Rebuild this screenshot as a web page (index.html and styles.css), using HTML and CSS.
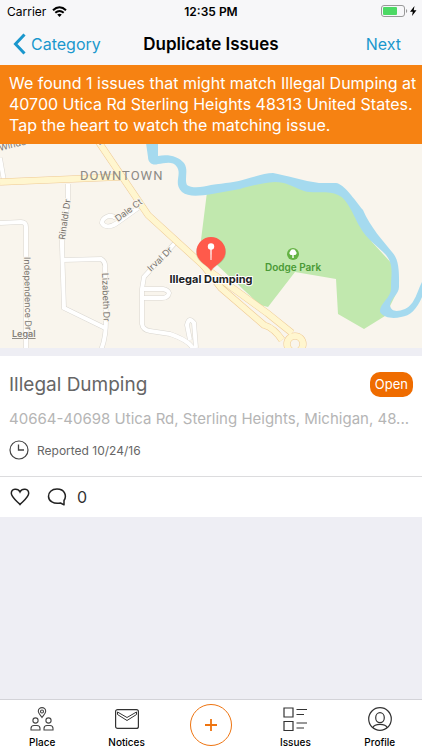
FILE: index.html
```html
<!doctype html>
<html lang="en">
<head>
  <meta charset="utf-8">
  <meta name="viewport" content="width=device-width, initial-scale=1">
  <title>Duplicate Issues</title>
  <link rel="stylesheet" href="styles.css">
</head>
<body>
  <header class="top">
    <div class="status">
      <div class="carrier">
        <span>Carrier</span>
        <svg width="15" height="11" viewBox="0 0 15 11" fill="none" stroke="#000" stroke-width="2">
          <path d="M1 4.2C5 .4 10 .4 14 4.2M3.3 6.8c2.600-2.300 5.800-2.300 8.400 0"/>
          <path d="M7.500 11 5.200 8.600c1.400-1.200 3.200-1.200 4.600 0z" fill="#000" stroke="none"/>
        </svg>
      </div>
      <span class="clock">12:35 PM</span>
      <div class="battery">
        <svg width="36" height="12" viewBox="0 0 36 12">
          <rect x=".5" y=".5" width="23" height="11" rx="2.500" fill="none" stroke="#999"/>
          <rect x="2" y="2" width="14" height="8" rx="1" fill="#4cd964"/>
          <path d="M25 4c1.600.5 1.600 3.500 0 4z" fill="#999"/>
          <path d="M33.500 1 29 6.800h2.800L31 11l4.500-5.800h-2.800z"/>
        </svg>
      </div>
    </div>
    <nav class="navbar">
      <a class="back" href="#">
        <svg width="13" height="22" viewBox="0 0 13 22" fill="none" stroke="#1a97cd" stroke-width="3">
          <path d="M11.500 1.500 2.500 11l9 9.500"/>
        </svg>
        Category
      </a>
      <h1>Duplicate Issues</h1>
      <a class="next" href="#">Next</a>
    </nav>
  </header>

  <p class="banner">We found 1 issues that might match Illegal Dumping at 40700 Utica Rd Sterling Heights 48313 United States. Tap the heart to watch the matching issue.</p>

  <main>
    <svg class="map" viewBox="0 0 422 204" preserveAspectRatio="xMidYMid slice">
      <rect width="422" height="204" fill="#f9f5ed"/>

      <!-- park -->
      <path d="M207 48 274 34 298 40 340 46 356 66 372 98 394 122 396 150 385 172 364 185 338 170 336 135 295 128 268 163 260 161 202 107 201 96z" fill="#c1e8ae"/>

      <!-- river -->
      <path d="M146-1H158V12C168 10 178 12 184 19C189 26 184 35 187 41C192 45 204 43 211 41C225 39 237 38 246 35C257 32 266 29 273 29C285 31 304 37 319 39H336C344 40 354 55 363 66C370 83 384 98 392 108C400 116 399 132 399 143C399 150 391 154 390 161C391 168 397 168 405 165C415 161 418 145 422 138V153C417 165 410 172 401 173C393 175 384 174 380 168C379 159 392 154 391 143C391 130 394 121 386 111C379 103 366 95 360 83C354 73 348 55 338 51C329 46 313 50 304 47C291 42 286 38 275 38C262 39 250 42 240 45L212 50C199 52 188 53 182 48C173 39 182 31 177 23C172 16 164 20 158 20C153 22 148 19 148 13z" fill="#a5daef"/>

      <!-- side streets -->
      <g fill="none" stroke="#d9d6d0" stroke-width="5">
        <path d="M0 14 4 37M26 205V83Q26 78 21 78L0 79"/>
        <path d="M68 40V58L62 90V102L64 164 105 184M63 116 101 115Q106 118 105 124L106 176Q106 194 101 206"/>
        <path d="M116 74C110 69 102 74 102 79C104 83 110 84 117 79L138 64"/>
        <path d="M175 99 144 133 142 145V180Q143 186 150 187L170 190Q190 197 193 205"/>
        <path d="M142 145H163Q168 146 169 149Q168 154 162 154H143M190 196 187 181Q189 172 194 179L196 204"/>
      </g>
      <g fill="none" stroke="#fff" stroke-width="4">
        <path d="M0 14 4 37M26 205V83Q26 78 21 78L0 79"/>
        <path d="M68 40V58L62 90V102L64 164 105 184M63 116 101 115Q106 118 105 124L106 176Q106 194 101 206"/>
        <path d="M116 74C110 69 102 74 102 79C104 83 110 84 117 79L138 64"/>
        <path d="M175 99 144 133 142 145V180Q143 186 150 187L170 190Q190 197 193 205"/>
        <path d="M142 145H163Q168 146 169 149Q168 154 162 154H143M190 196 187 181Q189 172 194 179L196 204"/>
      </g>

      <!-- main roads -->
      <g fill="none" stroke="#efc993" stroke-width="7">
        <path d="M0 38 120 33"/>
        <path d="M98-3 148 71 205 123"/>
        <path d="M203 121 221 144 264 181Q274 184 282 196M208 126 267 169 292 189"/>
        <ellipse cx="295" cy="200" rx="8" ry="8"/>
      </g>
      <g fill="none" stroke="#fff6cf" stroke-width="6">
        <path d="M0 38 120 33"/>
        <path d="M98-3 148 71 205 123"/>
        <path d="M203 121 221 144 264 181Q274 184 282 196M208 126 267 169 292 189"/>
        <ellipse cx="295" cy="200" rx="8" ry="8"/>
      </g>

      <g class="street-name">
        <text transform="translate(0 7) rotate(-14)">Windu</text>
        <text transform="translate(97 -3) rotate(55)">d</text>
        <text transform="translate(65 96) rotate(-82)">Rinaldi Dr</text>
        <text transform="translate(118 78) rotate(-37)">Dale Ct</text>
        <text transform="translate(151 128) rotate(-44)">Irval Dr</text>
        <text transform="translate(24 113) rotate(89)">Independence Dr</text>
        <text transform="translate(102 129) rotate(88)">Lizabeth Dr</text>
      </g>
      <text class="district" x="80" y="36">DOWNTOWN</text>

      <circle cx="293" cy="110" r="6" fill="#65b344"/>
      <path d="M292.300 114v-3h-1a2 2 0 0 1-1.200-3.500 3 3 0 0 1 5.800 0 2 2 0 0 1-1.200 3.500h-1v3z" fill="#fff"/>
      <text class="park-name" x="293" y="127">Dodge Park</text>

      <!-- pin -->
      <path d="M211 128C208 121 196 119 196 108.500A15 15 0 0 1 226 108.500C226 119 214 121 211 128z" fill="#000" opacity=".12"/>
      <path d="M211 127C208 121 196.500 118 196.500 107.500A14.500 14.500 0 0 1 225.500 107.500C225.500 118 214 121 211 127z" fill="#ff5a4b"/>
      <path d="M210.300 104H211.700L211.500 116H210.500z" fill="#fff"/>
      <circle cx="211" cy="102.500" r="3.200" fill="#fff"/>
      <text class="pin-name" x="211" y="139">Illegal Dumping</text>
      <text class="legal" x="12" y="193">Legal</text>
    </svg>

    <article class="issue">
      <div class="details">
        <div class="heading">
          <h2>Illegal Dumping</h2>
          <span class="badge">Open</span>
        </div>
        <p class="address">40664-40698 Utica Rd, Sterling Heights, Michigan, 48...</p>
        <div class="reported">
          <svg width="20" height="20" viewBox="0 0 20 20" fill="none" stroke="#444">
            <circle cx="10" cy="10" r="9" stroke-width="1.200"/>
            <path d="M9.500 4.500V10H15" stroke-width="1.300"/>
          </svg>
          <span>Reported 10/24/16</span>
        </div>
      </div>
      <div class="actions">
        <button type="button" aria-label="Watch">
          <svg width="20" height="18" viewBox="0 0 20 18" fill="none" stroke="#222" stroke-width="1.500">
            <path d="M10 16.500C8 14 1.300 9.500 1.300 5.300 1.300 .300 8 -.200 10 4 12 -.200 18.700 .300 18.700 5.300 18.700 9.500 12 14 10 16.500z"/>
          </svg>
        </button>
        <button type="button" aria-label="Comments">
          <svg width="20" height="18" viewBox="0 0 20 18" fill="none" stroke="#222" stroke-width="1.500" stroke-linejoin="round">
            <path d="M17 12.500C20 8 18 1 10 1 4.500 1 1.500 4.500 1.500 8.200 1.500 13 6.500 16.500 13.500 15L17 16.800z"/>
          </svg>
          <span>0</span>
        </button>
      </div>
    </article>
  </main>

  <nav class="tabs">
    <a href="#">
      <svg width="24" height="24" viewBox="0 0 24 24" fill="none" stroke="#444" stroke-width="1.100">
        <path d="M12 10.500C10.500 8.300 8.300 6.500 8.300 4.300A3.700 3.700 0 0 1 15.700 4.300C15.700 6.500 13.500 8.300 12 10.500z"/>
        <circle cx="12" cy="4.500" r="1.500"/>
        <circle cx="5.500" cy="13.500" r="2.600"/>
        <circle cx="18.500" cy="13.500" r="2.600"/>
        <path d="M1 23V21.500Q1 18.500 4 18.500H7Q10 18.500 10 21.500V23zM14 23V21.500Q14 18.500 17 18.500H20Q23 18.500 23 21.500V23z"/>
      </svg>
      <span>Place</span>
    </a>
    <a href="#">
      <svg width="24" height="24" viewBox="0 0 24 24" fill="none" stroke="#333" stroke-width="1.200">
        <rect x=".6" y="2.600" width="22.800" height="18.800" rx="2"/>
        <path d="M2.500 5 12 10.500 21.500 5V7.500L12 13.500 2.500 7.500z" stroke-width="1"/>
      </svg>
      <span>Notices</span>
    </a>
    <button type="button" class="add" aria-label="Add issue">
      <svg width="14" height="14" viewBox="0 0 14 14" stroke="#ee7410" stroke-width="1.800">
        <path d="M7 1V13M1 7H13"/>
      </svg>
    </button>
    <a href="#">
      <svg width="24" height="24" viewBox="0 0 24 24" fill="none" stroke="#333" stroke-width="1.200">
        <path d="M1 1H10V10H1zM1 14.500H10V23.500H1zM13.500 2.500H24M13.500 7.500H21M13.500 16H24M13.500 21H21"/>
      </svg>
      <span>Issues</span>
    </a>
    <a href="#">
      <svg width="24" height="24" viewBox="0 0 24 24" fill="none" stroke="#333" stroke-width="1.200">
        <circle cx="12" cy="12" r="11.300"/>
        <ellipse cx="12" cy="10.700" rx="4.300" ry="5"/>
        <path d="M5 20.500C6 17.500 9 17.300 12 17.300S18 17.500 19 20.500"/>
      </svg>
      <span>Profile</span>
    </a>
  </nav>
</body>
</html>
```
FILE: styles.css
```css
* {
  box-sizing: border-box;
}

body {
  margin: 0;
  min-height: 100vh;
  display: flex;
  flex-direction: column;
  background: #eeeef4;
  font-family: Inter, "Liberation Sans", sans-serif;
  color: #000;
}

h1, h2, p {
  margin: 0;
  font-weight: 400;
}

a {
  color: inherit;
  text-decoration: none;
}

button {
  padding: 0;
  border: none;
  background: none;
  font: inherit;
  color: inherit;
}

svg {
  display: block;
}

/* ========== Header ========== */
.top {
  background: #f7f7f9;
}

.status {
  display: grid;
  grid-template-columns: 1fr auto 1fr;
  align-items: center;
  height: 22px;
  padding: 0 5px;
  font-size: 12px;
}

.carrier {
  display: flex;
  align-items: center;
  gap: 6px;
  padding-left: 2px;
}

.clock {
  font-weight: 600;
}

.battery {
  justify-self: end;
}

.navbar {
  display: grid;
  grid-template-columns: 1fr auto 1fr;
  align-items: center;
  height: 43px;
  padding: 0 13px;
  font-size: 16px;
  color: #1a97cd;
}

.back {
  display: flex;
  align-items: center;
  gap: 5px;
}

.navbar h1 {
  font-size: 17px;
  font-weight: 600;
  color: #000;
}

.next {
  justify-self: end;
  padding-right: 8px;
}

/* ========== Banner ========== */
.banner {
  padding: 8px 0 8px 9px;
  background: #f68212;
  color: #fff;
  font-size: 16px;
  line-height: 21px;
}

/* ========== Map ========== */
.map {
  width: 100%;
  height: 204px;
}

.street-name {
  font-size: 9px;
  fill: #77736d;
  stroke: #f9f5ed;
  stroke-width: 2px;
  paint-order: stroke;
}

.district {
  font-family: Roboto, sans-serif;
  font-size: 13px;
  letter-spacing: 1px;
  fill: #8d8a85;
}

.park-name {
  font-size: 10px;
  font-weight: 600;
  text-anchor: middle;
  fill: #4a9a36;
}

.pin-name {
  font-size: 11px;
  font-weight: 700;
  text-anchor: middle;
  fill: #222;
  stroke: #fff;
  stroke-width: 2px;
  paint-order: stroke;
}

.legal {
  font-size: 9px;
  font-weight: 600;
  fill: #85817a;
  text-decoration: underline;
}

/* ========== Issue card ========== */
.issue {
  margin-top: 8px;
  background: #fff;
}

.details {
  padding: 16px 9px;
  border-bottom: 1px solid #dcdcde;
}

.heading {
  display: flex;
  justify-content: space-between;
  align-items: center;
}

.heading h2 {
  font-size: 19px;
  color: #666;
}

.badge {
  padding: 0 5px;
  border-radius: 10px;
  background: #ef6c00;
  color: #fff;
  font-size: 13px;
  line-height: 25px;
}

.address {
  margin: 12px 0 11px;
  overflow: hidden;
  white-space: nowrap;
  text-overflow: ellipsis;
  color: #b5b5b5;
  font-size: 15px;
  line-height: 20px;
}

.reported {
  display: flex;
  align-items: center;
  gap: 8px;
  color: #666;
  font-size: 12px;
}

.actions {
  display: flex;
  align-items: center;
  gap: 17px;
  height: 40px;
  padding: 0 10px;
}

.actions button {
  display: flex;
  align-items: center;
  gap: 10px;
  font-size: 16px;
  color: #333;
}

/* ========== Tab bar ========== */
.tabs {
  display: grid;
  grid-template-columns: repeat(5, 1fr);
  height: 51px;
  margin-top: auto;
  border-top: 1px solid #d3d3d8;
  background: #fff;
}

.tabs a {
  display: flex;
  flex-direction: column;
  align-items: center;
  gap: 4px;
  padding-top: 7px;
  font-size: 10px;
  font-weight: 500;
  line-height: 14px;
}

.tabs .add {
  display: grid;
  place-items: center;
  place-self: center;
  width: 42px;
  height: 42px;
  border: 1px solid #ee7410;
  border-radius: 50%;
}
```
